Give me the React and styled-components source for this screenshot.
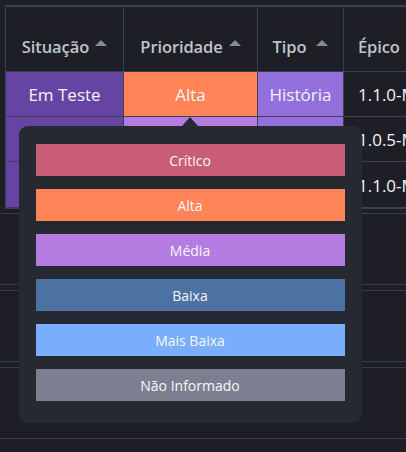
import React from 'react';
import styled, { createGlobalStyle } from 'styled-components';

const GlobalStyle = createGlobalStyle`
  html, body {
    margin: 0;
    padding: 0;
    background: #1e1f26;
    overflow: hidden;
  }
  * { box-sizing: border-box; }
  body {
    font-family: "Open Sans", "Noto Sans", sans-serif;
  }
`;

const Page = styled.div`
  width: 406px;
  height: 452px;
  padding-top: 5px;
  background: #1e1f26;
  overflow: hidden;
`;

const Table = styled.div`
  width: 470px;
  margin-left: 5px;
  border-top: 2px solid #38414e;
  border-left: 1px solid #38414e;
  border-bottom: 2px solid #38414e;
`;

const columns = '118px 134px 86px 1fr';

const HeaderRow = styled.div`
  display: grid;
  grid-template-columns: ${columns};
  height: 65px;
  border-bottom: 1px solid #38414e;
`;

const HeaderCell = styled.div`
  display: flex;
  align-items: center;
  justify-content: ${p => (p.left ? 'flex-start' : 'center')};
  gap: ${p => p.gap || 6}px;
  padding-top: 15px;
  padding-left: ${p => (p.left ? 14 : 0)}px;
  border-right: 1px solid #38414e;
  color: #bfc4cc;
  font-size: 16.5px;
  font-weight: 600;
  letter-spacing: -0.1px;
`;

const SortArrow = styled.span`
  width: 0;
  height: 0;
  margin-top: -8px;
  border-left: 6px solid transparent;
  border-right: 6px solid transparent;
  border-bottom: 6px solid #858a94;
`;

const BodyRow = styled.div`
  display: grid;
  grid-template-columns: ${columns};
  height: 45px;
  border-bottom: ${p => (p.last ? 'none' : '1px solid #3d4152')};
`;

const Cell = styled.div`
  position: relative;
  display: flex;
  align-items: center;
  justify-content: ${p => (p.left ? 'flex-start' : 'center')};
  padding-left: ${p => (p.left ? 14 : 0)}px;
  padding-top: 1px;
  background: ${p => p.bg || 'transparent'};
  border-right: 1px solid #3d4152;
  color: #f4f4f6;
  font-size: 17px;
  white-space: nowrap;
`;

const EmptyRows = styled.div`
  display: flex;
  flex-direction: column;
  gap: 5px;
  margin-top: 4px;
`;

const EmptyRow = styled.div`
  height: 72px;
  border-top: 1px solid #383b4a;
  border-bottom: 1px solid #383b4a;
`;

const Popover = styled.div`
  position: absolute;
  top: calc(100% + 10px);
  left: calc(50% - 172px);
  width: 343px;
  padding: 18px 17px 22px 17px;
  background: #262932;
  border-radius: 9px;
  display: flex;
  flex-direction: column;
  gap: 13px;
  z-index: 10;

  &::before {
    content: '';
    position: absolute;
    top: -9px;
    left: 50%;
    transform: translateX(-50%);
    border-left: 8px solid transparent;
    border-right: 8px solid transparent;
    border-bottom: 9px solid #262932;
  }
`;

const Option = styled.button`
  height: 32px;
  width: 100%;
  border: none;
  padding: 0;
  background: ${p => p.bg};
  color: #f7f7fa;
  font-family: "Open Sans", "Noto Sans", sans-serif;
  font-size: 14px;
  cursor: pointer;
`;

const priorities = [
  { label: 'Crítico', color: '#c95c76' },
  { label: 'Alta', color: '#ff8457' },
  { label: 'Média', color: '#b47be1' },
  { label: 'Baixa', color: '#4c71a3' },
  { label: 'Mais Baixa', color: '#78aefc' },
  { label: 'Não Informado', color: '#7b7f90' },
];

const rows = [
  { situacao: 'Em Teste', prioridade: 'Alta', prioColor: '#ff8457', tipo: 'História', epico: '1.1.0-MVP', open: true },
  { situacao: 'Em Teste', prioridade: 'Média', prioColor: '#b47be1', tipo: 'História', epico: '1.0.5-MVP' },
  { situacao: 'Em Teste', prioridade: 'Média', prioColor: '#b47be1', tipo: 'História', epico: '1.1.0-MVP' },
];

export default function App() {
  return (
    <Page>
      <GlobalStyle />
      <Table>
        <HeaderRow>
          <HeaderCell>Situação <SortArrow /></HeaderCell>
          <HeaderCell>Prioridade <SortArrow /></HeaderCell>
          <HeaderCell gap={10}>Tipo <SortArrow /></HeaderCell>
          <HeaderCell left>Épico</HeaderCell>
        </HeaderRow>
        {rows.map((r, i) => (
          <BodyRow key={i} last={i === rows.length - 1}>
            <Cell bg="#6644a4">{r.situacao}</Cell>
            <Cell bg={r.prioColor}>
              {r.prioridade}
              {r.open && (
                <Popover>
                  {priorities.map(p => (
                    <Option key={p.label} bg={p.color}>{p.label}</Option>
                  ))}
                </Popover>
              )}
            </Cell>
            <Cell bg="#9370db">{r.tipo}</Cell>
            <Cell left>{r.epico}</Cell>
          </BodyRow>
        ))}
      </Table>
      <EmptyRows>
        <EmptyRow />
        <EmptyRow />
        <EmptyRow />
      </EmptyRows>
    </Page>
  );
}
